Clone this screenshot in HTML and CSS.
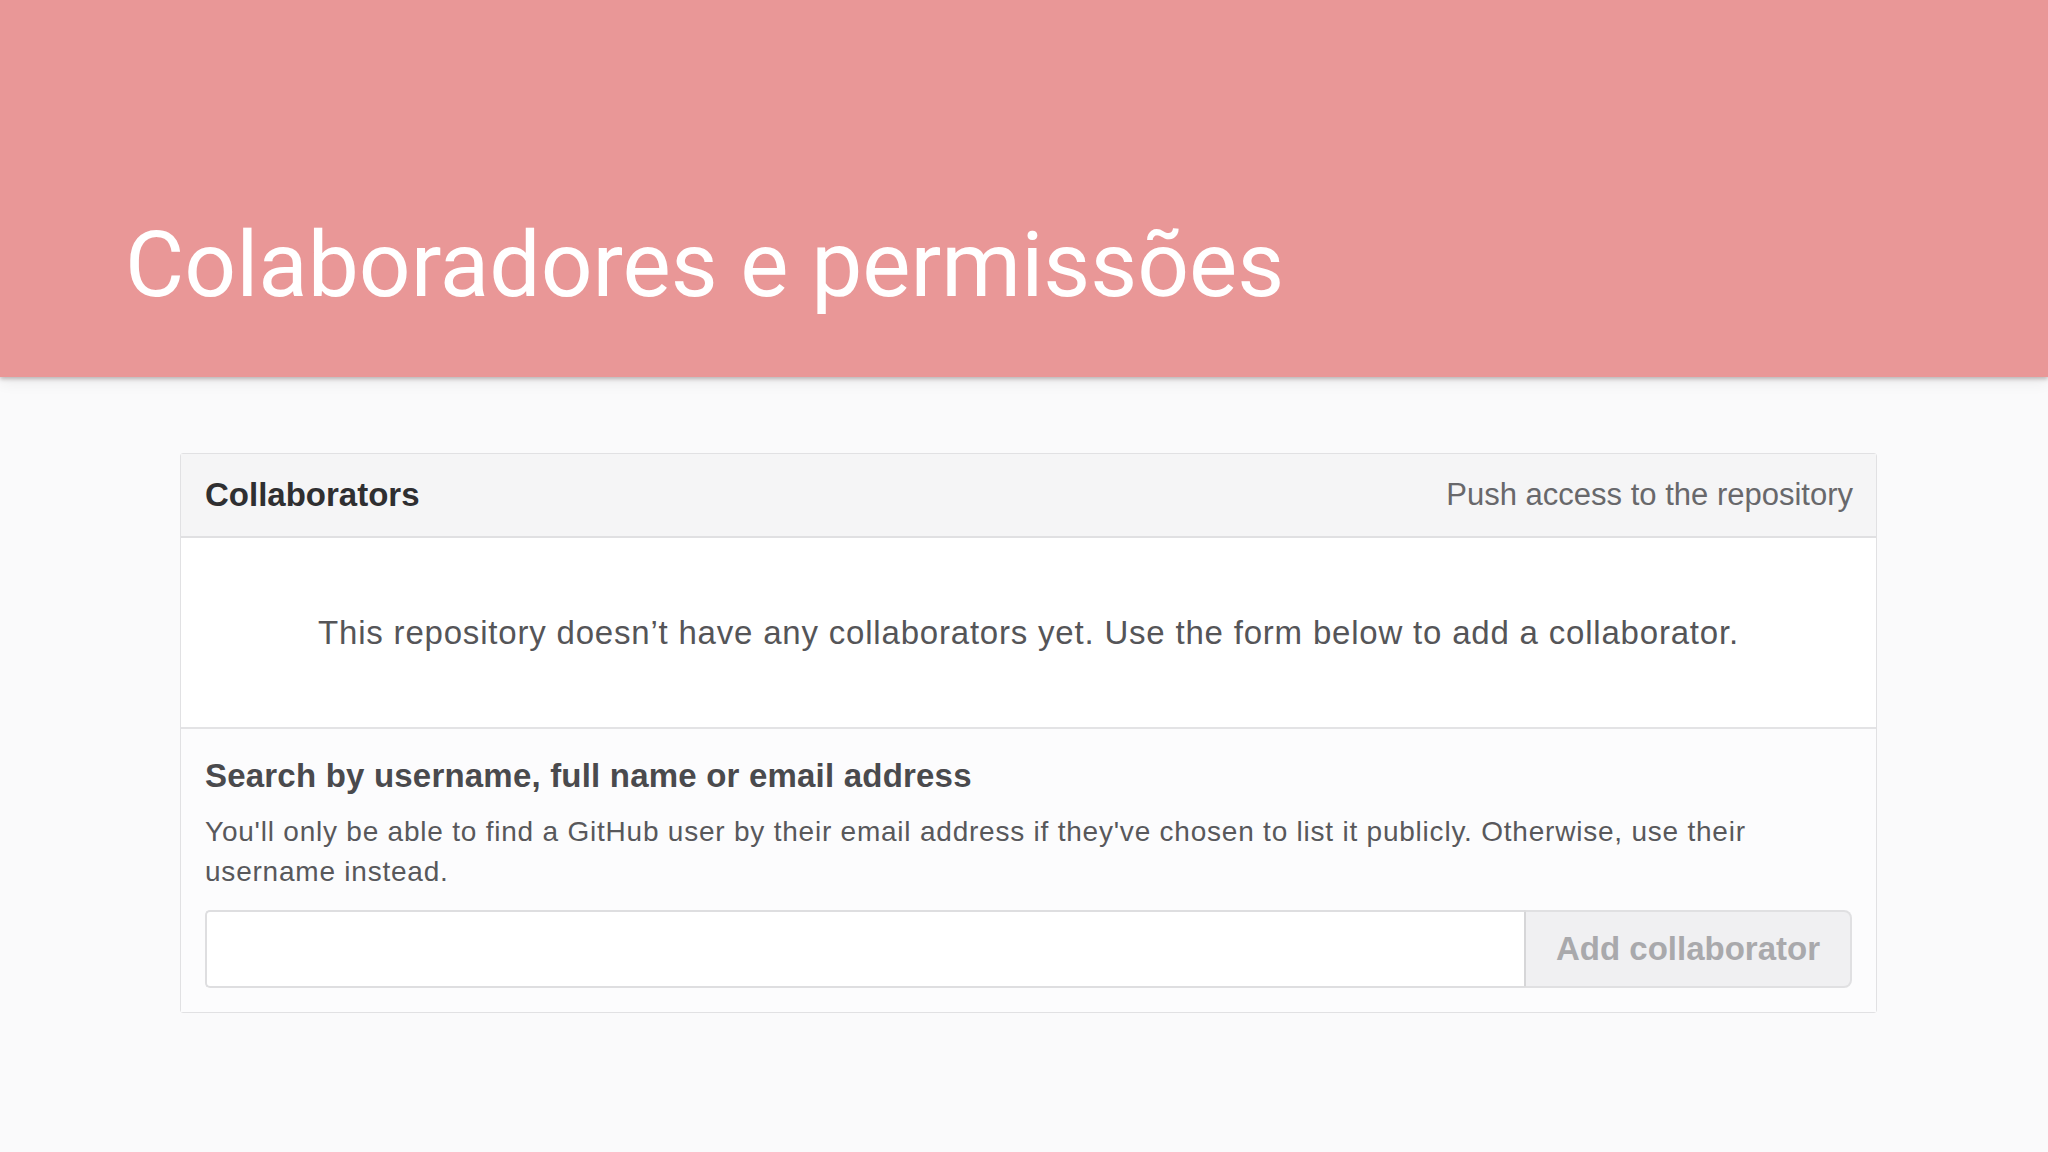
FILE: index.html
```html
<!DOCTYPE html>
<html lang="pt">
<head>
<meta charset="utf-8">
<title>Colaboradores e permissões</title>
<link rel="stylesheet" href="styles.css">
</head>
<body>
<header class="banner">
  <h1 class="banner-title">Colaboradores e permissões</h1>
</header>
<main class="content">
  <section class="card">
    <div class="card-head">
      <h3 class="card-title">Collaborators</h3>
      <span class="card-note">Push access to the repository</span>
    </div>
    <div class="card-empty">
      <p class="empty-text">This repository doesn’t have any collaborators yet. Use the form below to add a collaborator.</p>
    </div>
    <div class="card-form">
      <h4 class="form-title">Search by username, full name or email address</h4>
      <p class="form-help">You'll only be able to find a GitHub user by their email address if they've chosen to list it publicly. Otherwise, use their username instead.</p>
      <div class="form-row">
        <input class="form-input" type="text" aria-label="Search">
        <button class="form-button" type="button">Add collaborator</button>
      </div>
    </div>
  </section>
</main>
</body>
</html>
```
FILE: styles.css
```css
* { box-sizing: border-box; }
html, body {
  margin: 0;
  padding: 0;
  width: 2048px;
  height: 1152px;
  overflow: hidden;
  background: #fafafb;
}
.banner {
  height: 377px;
  background: #e99797;
  box-shadow: 0 2px 4px rgba(90, 70, 70, 0.35), 0 6px 14px rgba(0, 0, 0, 0.06);
  position: relative;
  z-index: 1;
  padding: 220px 0 0 125px;
}
.banner-title {
  margin: 0;
  font-family: Roboto, "Liberation Sans", sans-serif;
  font-weight: 400;
  font-size: 91px;
  line-height: 1;
  color: #ffffff;
}
.content {
  padding: 76px 171px 0 180px;
}
.card {
  width: 1697px;
  border: 1px solid #e1e1e3;
  border-radius: 3px;
  background: #ffffff;
  font-family: "Liberation Sans", Arial, sans-serif;
}
.card-head {
  height: 84px;
  background: #f5f5f6;
  border-bottom: 2px solid #e0e0e2;
  display: flex;
  align-items: center;
  justify-content: space-between;
  padding: 0 23px 0 24px;
}
.card-title {
  margin: 0;
  font-size: 33px;
  font-weight: 700;
  color: #2f2f31;
}
.card-note {
  font-size: 31px;
  color: #68686b;
}
.card-empty {
  height: 191px;
  border-bottom: 2px solid #e3e3e5;
  display: flex;
  align-items: center;
  justify-content: center;
}
.empty-text {
  margin: 0;
  font-size: 33px;
  letter-spacing: 0.8px;
  color: #555558;
}
.card-form {
  background: #fcfcfd;
  padding: 25px 24px 24px 24px;
}
.form-title {
  margin: 0;
  font-size: 33px;
  font-weight: 700;
  letter-spacing: 0.2px;
  color: #4a4a4d;
  line-height: 44px;
}
.form-help {
  margin: 14px 0 18px;
  font-size: 28px;
  letter-spacing: 0.78px;
  line-height: 40px;
  color: #58585b;
}
.form-row {
  display: flex;
  height: 78px;
}
.form-input {
  flex: 1;
  height: 100%;
  border: 2px solid #dedee0;
  border-right: 1px solid #d6d6d8;
  border-radius: 5px 0 0 5px;
  background: #ffffff;
  margin: 0;
}
.form-button {
  width: 327px;
  height: 100%;
  margin: 0;
  border: 2px solid #e0e0e2;
  border-left: 1px solid #d6d6d8;
  border-radius: 0 8px 8px 0;
  background: #f0f0f2;
  font-family: "Liberation Sans", Arial, sans-serif;
  font-size: 33px;
  font-weight: 700;
  color: #a9a9ac;
}
```
